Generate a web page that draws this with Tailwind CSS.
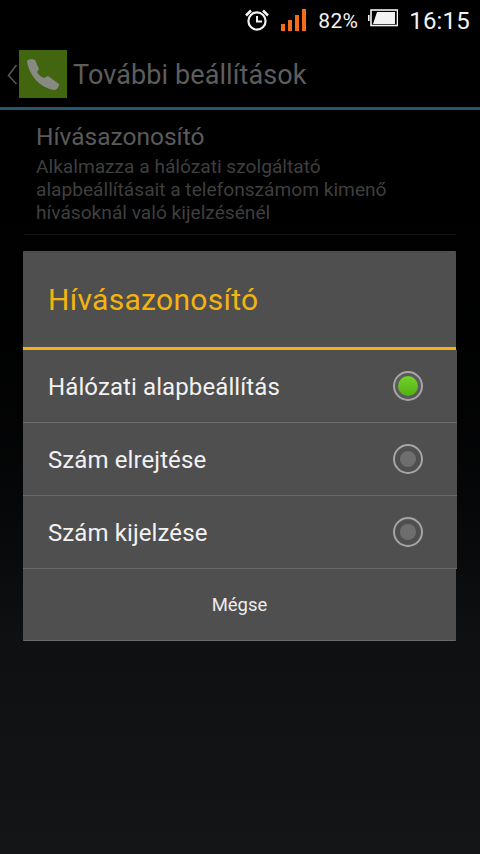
<!DOCTYPE html>
<html lang="hu">
<head>
  <meta charset="UTF-8" />
  <meta name="viewport" content="width=device-width, initial-scale=1.0" />
  <title>Hívásazonosító</title>
  <script src="https://cdn.jsdelivr.net/npm/@tailwindcss/browser@4"></script>
</head>
<body class="m-0 bg-black font-['Roboto',sans-serif]">
<div class="relative w-[480px] h-[854px] overflow-hidden bg-gradient-to-b from-[#000000] from-[12%] via-[#0e1012] via-[75%] to-[#131517]">

  <!-- status bar -->
  <div class="h-[40px] bg-black flex items-center justify-end pr-[10px] text-[#f2f2f2]">
    <svg class="w-[26px] h-[26px] mr-[10px]" viewBox="0 0 26 26" fill="none" stroke="#f2f2f2" stroke-width="2.2">
      <circle cx="13" cy="14" r="8.6"/>
      <path d="M13 9v5.5h5" stroke-width="2"/>
      <path d="M2 8.5 7 3.5M24 8.5 19 3.5" stroke-width="2.6"/>
    </svg>
    <svg class="w-[26px] h-[26px] mr-[12px]" viewBox="0 0 26 26" fill="#f26c1a">
      <rect x="1" y="17" width="4" height="7"/>
      <rect x="8" y="13" width="4" height="11"/>
      <rect x="15" y="8" width="4" height="16"/>
      <rect x="22" y="2" width="4" height="22"/>
    </svg>
    <span class="text-[21px] leading-none mr-[10px] mt-[2px] tracking-[0.3px]">82%</span>
    <svg class="w-[30px] h-[18px] mr-[11px] mb-[5px]" viewBox="0 0 30 18">
      <rect x="0" y="6" width="1.6" height="6" fill="#f2f2f2"/>
      <rect x="3" y="1" width="26.5" height="15.5" fill="none" stroke="#f2f2f2" stroke-width="1.6"/>
      <path d="M5 15 9 3H27V15Z" fill="#f2f2f2"/>
    </svg>
    <span class="text-[24px] leading-none tracking-[0.2px] mt-[1px]">16:15</span>
  </div>

  <!-- action bar -->
  <div class="h-[67px] flex items-center border-b-[3px] border-[#28566f] box-content">
    <svg class="w-[12px] h-[24px] ml-[6px] mt-[1px]" viewBox="0 0 12 24" fill="none" stroke="#555" stroke-width="1.6">
      <path d="M10.5 3 2.5 13.5 10.5 22"/>
    </svg>
    <div class="w-[48px] h-[48px] ml-px bg-[#41660f]">
      <svg class="w-[48px] h-[48px]" viewBox="0 0 48 48" fill="#868a82">
        <path d="M8 11C9 9 14 9 16 10L20 19 18 22C19 24 22 27 25 28L29 26 40 34C40 37 38 40 35 40 22 38 10 26 8 11Z"/>
      </svg>
    </div>
    <span class="ml-[6px] mt-[3px] text-[27px] leading-none text-[#5d5d5d] tracking-[0.1px]">További beállítások</span>
  </div>

  <!-- settings row behind the dialog -->
  <div class="mx-[24px] pl-[12px] pt-[13px] h-[125px] border-b border-[#14171a]">
    <p class="text-[24.5px] leading-[28px] text-[#5a5a5a]">Hívásazonosító</p>
    <p class="text-[19.15px] leading-[23px] text-[#3f3f3f] mt-[4px]">Alkalmazza a hálózati szolgáltató<br />alapbeállításait a telefonszámom kimenő<br />hívásoknál való kijelzésénél</p>
  </div>

  <!-- dialog -->
  <div class="absolute left-[23px] top-[251px] w-[433px] bg-[#4f4f4f] rounded-[1px] border-b border-[#6a6a6a]">
    <div class="h-[96px] flex items-center pl-[25px] pt-px text-[30px] text-[#f4b40e] tracking-[0.3px]">Hívásazonosító</div>
    <div class="h-[3px] bg-[#f2b311]"></div>

    <div class="h-[73px] -mr-px flex items-center justify-between pl-[25px] pr-[34px] border-b border-[#6b6b6b] bg-[#4f4f4f] text-[24px] text-[#f2f2f2] tracking-[0.1px]">
      <span class="mt-[2px]">Hálózati alapbeállítás</span>
      <span class="w-[30px] h-[30px] rounded-full border-2 border-[#a5a5a5] bg-[#5a5a5a] flex items-center justify-center">
        <span class="w-[20px] h-[20px] rounded-full bg-gradient-to-b from-[#72d329] to-[#52b012]"></span>
      </span>
    </div>
    <div class="h-[73px] -mr-px flex items-center justify-between pl-[25px] pr-[34px] border-b border-[#6b6b6b] bg-[#4f4f4f] text-[24px] text-[#f2f2f2] tracking-[0.1px]">
      <span class="mt-[2px]">Szám elrejtése</span>
      <span class="w-[30px] h-[30px] rounded-full border-2 border-[#a5a5a5] flex items-center justify-center">
        <span class="w-[16px] h-[16px] rounded-full bg-[#6e6e6e]"></span>
      </span>
    </div>
    <div class="h-[73px] -mr-px flex items-center justify-between pl-[25px] pr-[34px] border-b border-[#6b6b6b] bg-[#4f4f4f] text-[24px] text-[#f2f2f2] tracking-[0.1px]">
      <span class="mt-[2px]">Szám kijelzése</span>
      <span class="w-[30px] h-[30px] rounded-full border-2 border-[#a5a5a5] flex items-center justify-center">
        <span class="w-[16px] h-[16px] rounded-full bg-[#6e6e6e]"></span>
      </span>
    </div>

    <div class="h-[71px] pt-[2px] flex items-center justify-center text-[18.5px] text-[#ececec]">Mégse</div>
  </div>
</div>
</body>
</html>
